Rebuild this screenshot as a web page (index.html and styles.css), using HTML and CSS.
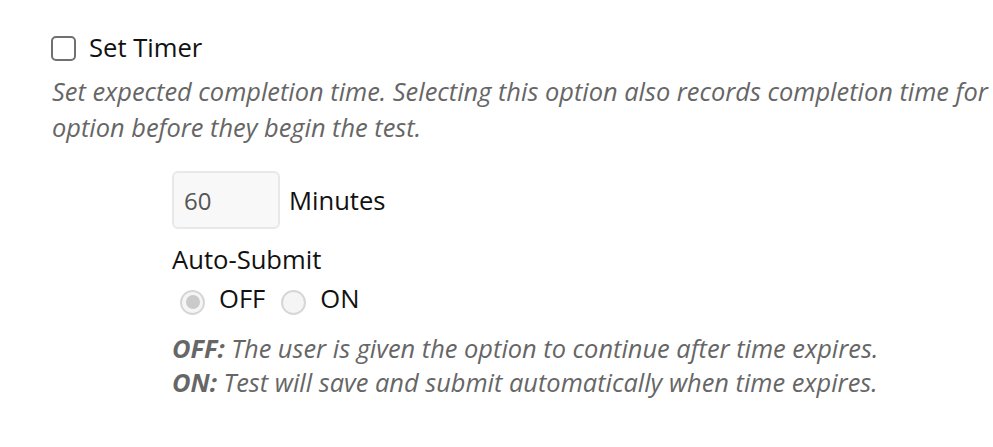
FILE: index.html
```html
<!doctype html>
<html lang="en">
  <head>
    <meta charset="UTF-8" />
    <meta name="viewport" content="width=device-width, initial-scale=1.0" />
    <title>Test Options</title>
    <link rel="stylesheet" href="styles.css">
  </head>
  <body>
    <div class="option">
      <label class="option-title">
        <span class="checkbox"></span>
        Set Timer
      </label>
      <p class="help">
        Set expected completion time. Selecting this option also records completion time for
        each attempt. Users are notified of the timer option before they begin the test.
      </p>

      <div class="timer">
        <div class="duration">
          <input class="minutes" type="text" value="60" disabled />
          <span>Minutes</span>
        </div>

        <div class="auto-submit">
          <div class="label">Auto-Submit</div>
          <div class="radios">
            <span class="radio checked"></span>
            <span class="radio-label">OFF</span>
            <span class="radio"></span>
            <span class="radio-label">ON</span>
          </div>
        </div>

        <p class="notes">
          <strong>OFF:</strong> The user is given the option to continue after time expires.<br />
          <strong>ON:</strong> Test will save and submit automatically when time expires.
        </p>
      </div>
    </div>
  </body>
</html>
```

FILE: styles.css
```css
body {
  margin: 0;
  background: #fff;
  color: #111;
  font-family: "Open Sans", sans-serif;
  font-size: 25.6px;
  overflow: hidden;
}

.option {
  width: 1520px;
  padding: 31px 0 0 51px;
}

.option-title {
  display: flex;
  align-items: center;
  gap: 13px;
  line-height: 34px;
}

.checkbox {
  width: 21px;
  height: 21px;
  border: 2.5px solid #707070;
  border-radius: 5px;
  background: #fff;
}

.help {
  width: 1470px;
  margin: 8px 0 0 1px;
  font-size: 25.4px;
  line-height: 36px;
  font-style: italic;
  color: #666;
}

.timer {
  padding: 26px 0 0 121px;
}

.duration {
  display: flex;
  align-items: center;
  gap: 9px;
}

.minutes {
  width: 108px;
  height: 58px;
  box-sizing: border-box;
  padding: 0 10px;
  border: 2px solid #e8e8e8;
  border-radius: 6px;
  background: #f8f8f8;
  color: #555;
  font-family: inherit;
  font-size: 24px;
}

.auto-submit {
  margin-top: 13px;
  line-height: 36px;
}

.radios {
  display: flex;
  align-items: center;
  padding: 3px 0 0 8px;
}

.radio {
  width: 21px;
  height: 21px;
  border: 2.5px solid #d6d6d6;
  border-radius: 50%;
  background: #f5f5f5;
  display: flex;
  align-items: center;
  justify-content: center;
  margin-top: 6px;
}

.radio.checked::after {
  content: "";
  width: 14px;
  height: 14px;
  border-radius: 50%;
  background: #cacaca;
}

.radio-label {
  margin: 0 16px 0 14px;
}

.notes {
  margin: 14px 0 0;
  font-size: 25.4px;
  line-height: 34px;
  font-style: italic;
  color: #666;
}

.notes strong {
  font-weight: 700;
}
```
